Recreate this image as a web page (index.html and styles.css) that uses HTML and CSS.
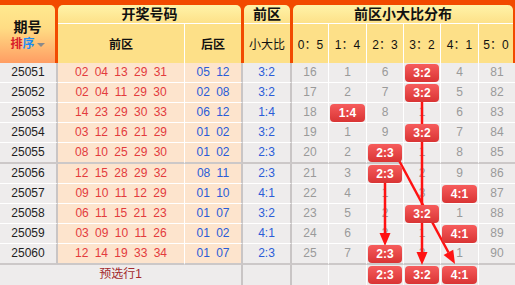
FILE: index.html
```html
<!DOCTYPE html>
<html lang="zh">
<head>
<meta charset="utf-8">
<title>小大比分布</title>
<link rel="stylesheet" href="styles.css">
</head>
<body>
<div class="board">
  <div class="head">
    <div class="tab tab-id">
      <div class="id-title">期号</div>
      <div class="sort"><span class="s-red">排</span><span class="s-blue">序</span><span class="caret"></span></div>
    </div>
    <div class="tab">
      <div class="tab-top">开奖号码</div>
      <div class="tab-bot draw-bot"><div class="hc">前区</div><div class="hc">后区</div></div>
    </div>
    <div class="tab">
      <div class="tab-top">前区</div>
      <div class="tab-bot one-bot"><div class="hc normal">小大比</div></div>
    </div>
    <div class="tab">
      <div class="tab-top">前区小大比分布</div>
      <div class="tab-bot dist-bot">
        <div class="hc normal">0：5</div><div class="hc normal">1：4</div><div class="hc normal">2：3</div>
        <div class="hc normal">3：2</div><div class="hc normal">4：1</div><div class="hc normal">5：0</div>
      </div>
    </div>
  </div>

  <div class="rows">
    <div class="row"><div class="id">25051</div><div class="fr">02 04 13 29 31</div><div class="bk">05 12</div><div class="ra">3:2</div><div class="d">16</div><div class="d">1</div><div class="d">6</div><div class="d"><span class="badge">3:2</span></div><div class="d">4</div><div class="d">81</div></div>
    <div class="row"><div class="id">25052</div><div class="fr">02 04 11 29 30</div><div class="bk">02 08</div><div class="ra">3:2</div><div class="d">17</div><div class="d">2</div><div class="d">7</div><div class="d"><span class="badge">3:2</span></div><div class="d">5</div><div class="d">82</div></div>
    <div class="row"><div class="id">25053</div><div class="fr">14 23 29 30 33</div><div class="bk">06 12</div><div class="ra">1:4</div><div class="d">18</div><div class="d"><span class="badge">1:4</span></div><div class="d">8</div><div class="d">1</div><div class="d">6</div><div class="d">83</div></div>
    <div class="row"><div class="id">25054</div><div class="fr">03 12 16 21 29</div><div class="bk">01 02</div><div class="ra">3:2</div><div class="d">19</div><div class="d">1</div><div class="d">9</div><div class="d"><span class="badge">3:2</span></div><div class="d">7</div><div class="d">84</div></div>
    <div class="row sep"><div class="id">25055</div><div class="fr">08 10 25 29 30</div><div class="bk">01 02</div><div class="ra">2:3</div><div class="d">20</div><div class="d">2</div><div class="d"><span class="badge">2:3</span></div><div class="d">1</div><div class="d">8</div><div class="d">85</div></div>
    <div class="row"><div class="id">25056</div><div class="fr">12 15 28 29 32</div><div class="bk">08 11</div><div class="ra">2:3</div><div class="d">21</div><div class="d">3</div><div class="d"><span class="badge">2:3</span></div><div class="d">2</div><div class="d">9</div><div class="d">86</div></div>
    <div class="row"><div class="id">25057</div><div class="fr">09 10 11 12 29</div><div class="bk">01 10</div><div class="ra">4:1</div><div class="d">22</div><div class="d">4</div><div class="d">1</div><div class="d">3</div><div class="d"><span class="badge">4:1</span></div><div class="d">87</div></div>
    <div class="row"><div class="id">25058</div><div class="fr">06 11 15 21 23</div><div class="bk">01 07</div><div class="ra">3:2</div><div class="d">23</div><div class="d">5</div><div class="d">2</div><div class="d"><span class="badge">3:2</span></div><div class="d">1</div><div class="d">88</div></div>
    <div class="row"><div class="id">25059</div><div class="fr">03 09 10 11 26</div><div class="bk">01 02</div><div class="ra">4:1</div><div class="d">24</div><div class="d">6</div><div class="d">3</div><div class="d">1</div><div class="d"><span class="badge">4:1</span></div><div class="d">89</div></div>
    <div class="row sep"><div class="id">25060</div><div class="fr">12 14 19 33 34</div><div class="bk">01 07</div><div class="ra">2:3</div><div class="d">25</div><div class="d">7</div><div class="d"><span class="badge">2:3</span></div><div class="d">2</div><div class="d">1</div><div class="d">90</div></div>
    <div class="row pre"><div class="pre-label">预选行1</div><div class="ra"></div><div class="d"></div><div class="d"></div><div class="d"><span class="badge">2:3</span></div><div class="d"><span class="badge">3:2</span></div><div class="d"><span class="badge">4:1</span></div><div class="d"></div></div>
  </div>

  <svg class="trend" width="515" height="285" viewBox="0 0 515 285">
    <g stroke="#ff1212" stroke-width="2.5" fill="none">
      <line x1="385" y1="180" x2="385" y2="234"/>
      <line x1="422" y1="100" x2="422" y2="253"/>
      <line x1="395" y1="153" x2="448.5" y2="252.5"/>
    </g>
    <g fill="#ff1212">
      <polygon points="379.5,233 390.5,233 385,246"/>
      <polygon points="416.5,252 427.5,252 422,265"/>
      <polygon points="453.2,249.8 443.6,255 455,264"/>
    </g>
  </svg>
</div>
</body>
</html>
```
FILE: styles.css
```css
* {
  box-sizing: border-box;
  margin: 0;
  padding: 0;
}

body {
  margin: 0;
  width: 515px;
  height: 285px;
  overflow: hidden;
  background: #ffffff;
  font-family: "Liberation Sans", "Noto Sans CJK SC", sans-serif;
  font-size: 12px;
  color: #222;
}

.board {
  position: relative;
  width: 515px;
}

/* ---------- header ---------- */
.head {
  display: grid;
  grid-template-columns: 55px 183px 46px 220px;
  column-gap: 3px;
  height: 63px;
  padding: 5px 2px 0 0;
  background: #f24a00;
}

.tab {
  display: flex;
  flex-direction: column;
  border-radius: 5px 5px 0 0;
  overflow: hidden;
  color: #111;
}

.tab-id {
  border-top-left-radius: 0;
  align-items: center;
  padding-top: 14px;
  background: linear-gradient(#ffe98f, #ffdc84 40%, #ff9d63);
}

.id-title {
  font-size: 14px;
  font-weight: bold;
  line-height: 16px;
}

.sort {
  margin-top: 2px;
  display: flex;
  align-items: center;
  font-size: 12px;
  font-weight: bold;
  line-height: 15px;
}

.s-red { color: #d8202a; }
.s-blue { color: #1b8cf5; }

.caret {
  display: inline-block;
  margin-left: 2px;
  width: 0;
  height: 0;
  border-left: 4px solid transparent;
  border-right: 4px solid transparent;
  border-top: 4px solid #8a8a8a;
}

.tab-top {
  height: 19px;
  line-height: 18px;
  text-align: center;
  font-size: 14px;
  font-weight: bold;
  border-bottom: 1px solid #ffffff;
  background: linear-gradient(#fff3a8, #fde189);
}

.tab-bot {
  flex: 1;
  display: grid;
  background: #fde088;
}

.draw-bot { grid-template-columns: 127px 56px; }
.one-bot { grid-template-columns: 1fr; }
.dist-bot { grid-template-columns: 36px 38px 37px 37px 38px 34px; }

.hc {
  display: flex;
  align-items: center;
  justify-content: center;
  font-size: 12px;
  font-weight: bold;
  border-right: 1px solid #ffffff;
}

.hc:last-child { border-right: 0; }

.hc.normal { font-weight: normal; }

/* ---------- body ---------- */
.row {
  display: grid;
  grid-template-columns: 58px 127px 58px 49px 37px 38px 37px 37px 38px 36px;
  height: 20px;
}

.row > div {
  border-bottom: 1px solid #ffffff;
  text-align: center;
  line-height: 19px;
  white-space: nowrap;
}

.row.sep { height: 21px; }
.row.sep > div { border-bottom: 2px solid #ccc8c8; }

.row.pre { height: 20px; }
.row.pre > div { border-bottom: 0; }

.id {
  background: #eeecec;
  color: #1e1e1e;
  border-right: 2px solid #c9c5c5;
}

.fr {
  background: #fde4cd;
  color: #e33b3d;
  border-right: 1px solid #ffffff;
  word-spacing: 3px;
}

.bk {
  background: #fde4cd;
  color: #2a5cd8;
  border-right: 2px solid #c9c5c5;
  word-spacing: 3px;
}

.ra {
  background: #eeecec;
  color: #2a5cd8;
  border-right: 2px solid #c9c5c5;
}

.d {
  background: #eeecec;
  color: #9a9a9a;
  border-right: 1px solid #ffffff;
}

.d:last-child { border-right: 0; }

.pre-label {
  grid-column: span 3;
  background: #eeecec;
  color: #a3292d;
  border-right: 2px solid #c9c5c5;
}

.badge {
  position: relative;
  z-index: 2;
  display: block;
  height: 18px;
  margin: 1px 1px 0;
  border-radius: 4px;
  background: linear-gradient(#f65c5c, #d93434);
  color: #ffffff;
  font-weight: bold;
  line-height: 18px;
}

.trend {
  position: absolute;
  top: 0;
  left: 0;
  z-index: 1;
  pointer-events: none;
}
```
